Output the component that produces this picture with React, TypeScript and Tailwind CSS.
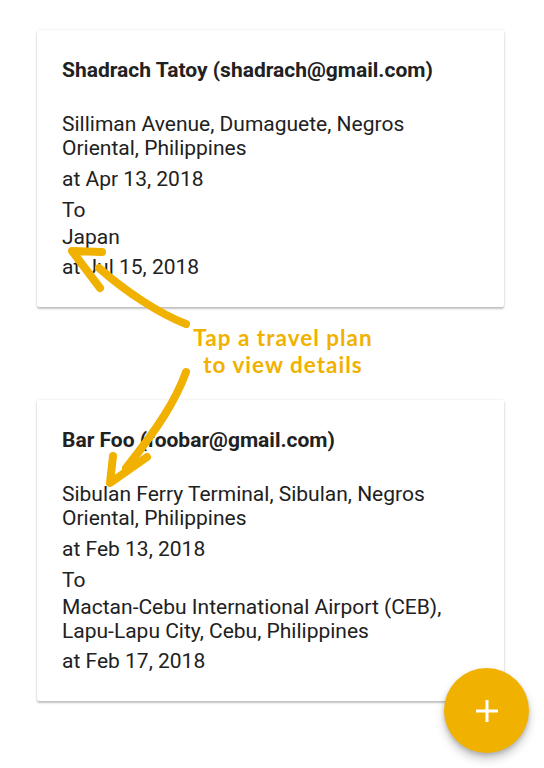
type Plan = {
  name: string;
  email: string;
  from: string;
  fromDate: string;
  to: string;
  toDate: string;
};

const plans: Plan[] = [
  {
    name: 'Shadrach Tatoy',
    email: 'shadrach@gmail.com',
    from: 'Silliman Avenue, Dumaguete, Negros Oriental, Philippines',
    fromDate: 'Apr 13, 2018',
    to: 'Japan',
    toDate: 'Jul 15, 2018',
  },
  {
    name: 'Bar Foo',
    email: 'foobar@gmail.com',
    from: 'Sibulan Ferry Terminal, Sibulan, Negros Oriental, Philippines',
    fromDate: 'Feb 13, 2018',
    to: 'Mactan-Cebu International Airport (CEB), Lapu\u2011Lapu City, Cebu, Philippines',
    toDate: 'Feb 17, 2018',
  },
];

function PlanCard({ plan }: { plan: Plan }) {
  return (
    <div className="bg-white rounded-[2px] pl-[25px] pr-[50px] pt-[28px] pb-[28px] shadow-[0_2px_2px_rgba(0,0,0,0.22),0_0_3px_rgba(0,0,0,0.1)] text-[21px] leading-[24px] text-[#212121]">
      <p className="font-bold mb-[30px] whitespace-nowrap">
        {plan.name} ({plan.email})
      </p>
      <p className="mb-[7px]">{plan.from}</p>
      <p className="mb-[7px]">at {plan.fromDate}</p>
      <p className="mb-[3px]">To</p>
      <p className="mb-[6px]">{plan.to}</p>
      <p>at {plan.toDate}</p>
    </div>
  );
}

export default function App() {
  return (
    <div className="relative min-h-screen bg-white font-['Roboto',sans-serif] overflow-hidden">
      <main className="ml-[37px] w-[467px] pt-[30px]">
        <PlanCard plan={plans[0]} />

        {/* hint */}
        <div className="h-[93px] pt-[17px] pl-[25px] text-center font-['Lato',sans-serif] font-bold text-[22.5px] leading-[27px] tracking-[1px] text-[#f1b100]">
          <p>Tap a travel plan</p>
          <p>to view details</p>
        </div>

        <PlanCard plan={plans[1]} />
      </main>

      {/* hand-drawn arrows */}
      <svg
        className="absolute left-0 top-0 pointer-events-none"
        width="544"
        height="768"
        viewBox="0 0 544 768"
        fill="none"
        stroke="#f1b100"
        strokeWidth="8"
        strokeLinecap="round"
        strokeLinejoin="round"
      >
        <path d="M186 324 C 160 314, 126 292, 99 268" />
        <path d="M102 252 L 72 251 L 100 288" />
        <path d="M186 372 C 176 400, 158 428, 126 468" />
        <path d="M113 456 L 110 483 L 147 457" />
      </svg>

      <button className="fixed right-[15px] bottom-[15px] w-[85px] h-[85px] rounded-full bg-[#f1b100] flex items-center justify-center shadow-[0_6px_10px_rgba(0,0,0,0.22),0_2px_4px_rgba(0,0,0,0.16)]">
        <svg width="24" height="24" viewBox="0 0 24 24" stroke="white" strokeWidth="3">
          <path d="M12 1 V23 M1 12 H23" />
        </svg>
      </button>
    </div>
  );
}
